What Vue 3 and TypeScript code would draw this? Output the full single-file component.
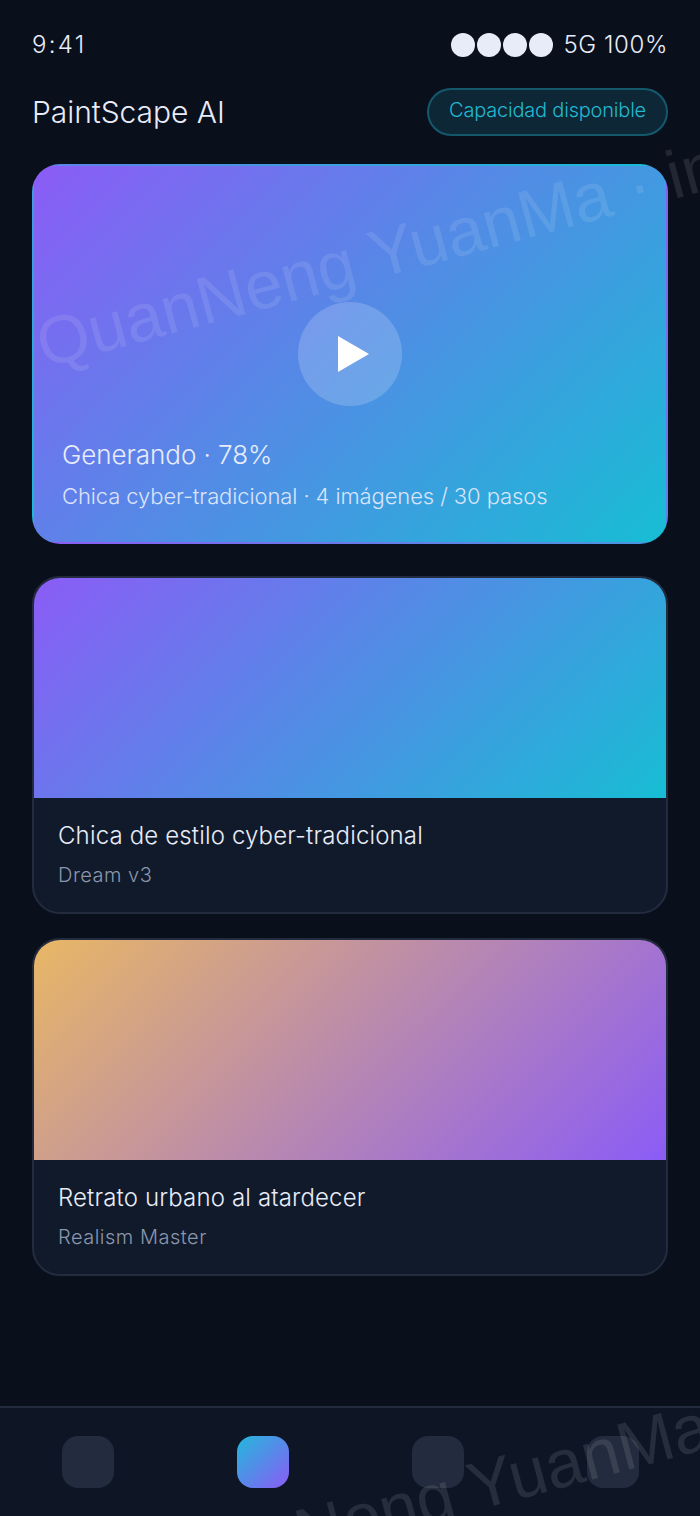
<script setup lang="ts">
interface Work {
  title: string
  model: string
  art: string
}

const works: Work[] = [
  { title: 'Chica de estilo cyber-tradicional', model: 'Dream v3', art: 'art-cyber' },
  { title: 'Retrato urbano al atardecer', model: 'Realism Master', art: 'art-sunset' },
]

const tabs = [false, true, false, false]
</script>

<template>
  <div class="screen">
    <div class="status">
      <span class="time">9:41</span>
      <div class="status-right">
        <i v-for="n in 4" :key="n" class="dot" />
        <span class="status-text">5G 100%</span>
      </div>
    </div>

    <header class="top">
      <h1>PaintScape AI</h1>
      <span class="badge">Capacidad disponible</span>
    </header>

    <section class="hero">
      <div class="play">
        <svg width="32" height="36" viewBox="0 0 32 36"><path d="M0 0L31 18L0 36Z" fill="#fff" /></svg>
      </div>
      <div class="hero-info">
        <div class="hero-title">Generando · 78%</div>
        <div class="hero-sub">Chica cyber-tradicional · 4 imágenes / 30 pasos</div>
      </div>
    </section>

    <div class="list">
      <article v-for="w in works" :key="w.title" class="card">
        <div class="art" :class="w.art" />
        <div class="card-body">
          <div class="card-title">{{ w.title }}</div>
          <div class="card-model">{{ w.model }}</div>
        </div>
      </article>
    </div>

    <nav class="tabs">
      <i v-for="(on, i) in tabs" :key="i" class="tab" :class="{ active: on }" />
    </nav>

    <div class="mark mark-top">QuanNeng YuanMa · in</div>
    <div class="mark mark-bottom">QuanNeng YuanMa</div>
  </div>
</template>

<style>
html, body {
  margin: 0;
  background: #0a0f1c;
}
</style>

<style scoped>
.screen {
  position: relative;
  width: 700px;
  height: 1516px;
  overflow: hidden;
  background: #0a0f1c;
  color: #e8ecf8;
  font-family: Inter, "Liberation Sans", sans-serif;
  font-weight: 300;
  display: flex;
  flex-direction: column;
}

.status {
  display: flex;
  justify-content: space-between;
  align-items: center;
  padding: 28px 32px 0;
  height: 34px;
  font-size: 24px;
  line-height: 34px;
}

.time {
  letter-spacing: 2.3px;
}

.status-right {
  display: flex;
  align-items: center;
  gap: 2px;
}

.dot {
  width: 24px;
  height: 24px;
  border-radius: 50%;
  background: #e8ecf8;
}

.status-text {
  margin-left: 8px;
  letter-spacing: 0.6px;
}

.top {
  display: flex;
  justify-content: space-between;
  align-items: center;
  padding: 0 32px;
  margin-top: 26px;
}

.top h1 {
  margin: 0;
  font-size: 30px;
  font-weight: 300;
  letter-spacing: -0.05px;
}

.badge {
  box-sizing: border-box;
  height: 48px;
  line-height: 40px;
  padding: 0 20px;
  font-size: 20px;
  letter-spacing: -0.2px;
  color: #22b8cf;
  background: rgba(34, 184, 207, 0.15);
  border: 2px solid rgba(34, 184, 207, 0.35);
  border-radius: 24px;
}

.hero {
  box-sizing: border-box;
  position: relative;
  height: 380px;
  margin: 28px 32px 0;
  border: 2px solid transparent;
  border-radius: 28px;
  background: linear-gradient(135deg, #8b5cf6, #17bdd4);
  display: flex;
  flex-direction: column;
  justify-content: flex-end;
  padding: 0 28px 31px;
}

.play {
  position: absolute;
  left: 264px;
  top: 136px;
  width: 104px;
  height: 104px;
  border-radius: 50%;
  background: rgba(255, 255, 255, 0.18);
  display: flex;
  align-items: center;
  justify-content: center;
}

.play svg {
  margin-left: 8px;
}

.hero-title {
  font-size: 26px;
  line-height: 36px;
  letter-spacing: -0.05px;
}

.hero-sub {
  margin-top: 8px;
  font-size: 22px;
  line-height: 30px;
  letter-spacing: -0.1px;
  color: #dbe4fb;
}

.list {
  display: flex;
  flex-direction: column;
  gap: 24px;
  margin: 32px 32px 0;
}

.card {
  box-sizing: border-box;
  height: 338px;
  border: 2px solid #232c3e;
  border-radius: 28px;
  background: #111a2b;
  overflow: hidden;
}

.art {
  height: 220px;
}

.art-cyber {
  background: linear-gradient(135deg, #8b5cf6, #17bdd4);
}

.art-sunset {
  background: linear-gradient(135deg, #e8b765, #8b5cf6);
}

.card-body {
  padding: 21px 24px 0;
}

.card-title {
  font-size: 24px;
  line-height: 34px;
  letter-spacing: 0.15px;
  font-weight: 350;
}

.card-model {
  margin-top: 8px;
  font-size: 20px;
  line-height: 28px;
  letter-spacing: 0.5px;
  color: #8a97ad;
}

.tabs {
  box-sizing: border-box;
  position: absolute;
  left: 0;
  right: 0;
  bottom: 0;
  height: 110px;
  border-top: 2px solid #232c3e;
  background: #0e1626;
  display: flex;
  justify-content: space-around;
  padding-top: 28px;
}

.tab {
  width: 52px;
  height: 52px;
  border-radius: 16px;
  background: #232c3e;
}

.tab.active {
  background: linear-gradient(135deg, #22b8dc, #8b5cf6);
}

.mark {
  position: absolute;
  white-space: nowrap;
  font-family: "Liberation Sans", sans-serif;
  font-weight: 400;
  font-size: 67.5px;
  color: rgba(255, 255, 255, 0.1);
  transform: rotate(-15deg);
  transform-origin: left top;
  pointer-events: none;
}

.mark-top {
  left: 28px;
  top: 308px;
}

.mark-bottom {
  left: 127px;
  top: 1540px;
}
</style>
